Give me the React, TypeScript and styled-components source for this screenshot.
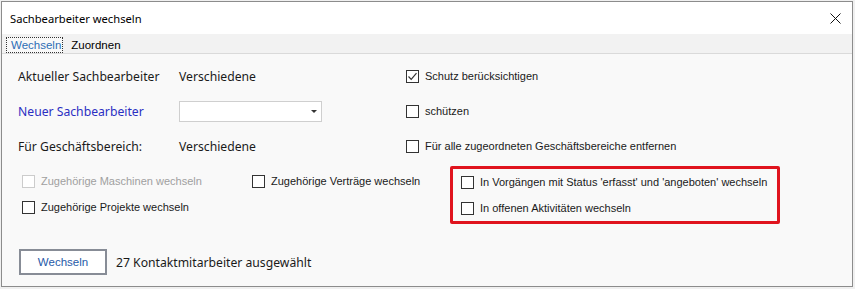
import React from 'react';
import styled, { createGlobalStyle } from 'styled-components';

const GlobalStyle = createGlobalStyle`
  html, body {
    margin: 0;
    padding: 0;
    background: #f0f0f0;
  }
  body {
    padding: 1px 0 0 1px;
  }
`;

const Dialog = styled.div`
  width: 850px;
  height: 284px;
  border: 1px solid #8c8c8c;
  background: #f9f9f9;
  display: flex;
  flex-direction: column;
  font-family: 'Liberation Sans', Arial, sans-serif;
  font-size: 11px;
  color: #1a1a1a;
`;

const TitleBar = styled.div`
  height: 32px;
  background: #fff;
  display: flex;
  align-items: center;
  justify-content: space-between;
  padding: 0 9px 0 8px;
  font-family: 'Noto Sans', 'Open Sans', sans-serif;
  font-size: 11.2px;
  color: #000;
`;

const CloseButton = styled.button`
  border: none;
  background: transparent;
  padding: 0;
  width: 16px;
  height: 16px;
  display: flex;
  align-items: center;
  justify-content: center;
  cursor: pointer;
`;

const TabStrip = styled.div`
  height: 19px;
  background: #f2f2f2;
  display: flex;
  align-items: flex-end;
  padding-left: 4px;
  border-bottom: 1px solid #dadada;
`;

const Tab = styled.div<{ $active?: boolean }>`
  height: 16px;
  line-height: 14px;
  padding: 0 1px 0 4px;
  margin-right: 3px;
  box-sizing: border-box;
  font-size: 11.5px;
  border: 1px dotted ${(p) => (p.$active ? '#333' : 'transparent')};
  background: ${(p) => (p.$active ? '#f9f9f9' : 'transparent')};
  color: ${(p) => (p.$active ? '#2d6db5' : '#000')};
`;

const Body = styled.div`
  flex: 1;
  display: flex;
  flex-direction: column;
  padding: 5px 0 0 16px;
`;

const FormGrid = styled.div`
  display: grid;
  grid-template-columns: 161px 227px 1fr;
  grid-auto-rows: 35px;
  align-items: center;
  font-family: 'Noto Sans', 'Open Sans', sans-serif;
  font-size: 12.2px;
`;

const Label = styled.div<{ $link?: boolean }>`
  color: ${(p) => (p.$link ? '#2b2fc2' : '#1a1a1a')};
`;

const Select = styled.div`
  width: 143px;
  height: 21px;
  box-sizing: border-box;
  border: 1px solid #cfcfcf;
  background: #fff;
  display: flex;
  align-items: center;
  justify-content: flex-end;
  padding-right: 4px;
`;

const Arrow = styled.span`
  width: 0;
  height: 0;
  border-left: 3px solid transparent;
  border-right: 3px solid transparent;
  border-top: 3px solid #333;
`;

const CheckRow = styled.label<{ $disabled?: boolean }>`
  display: flex;
  align-items: center;
  gap: 6px;
  font-family: 'Liberation Sans', Arial, sans-serif;
  font-size: 11px;
  line-height: 13px;
  color: ${(p) => (p.$disabled ? '#a0a0a0' : '#1a1a1a')};
  white-space: nowrap;
`;

const Box = styled.span<{ $disabled?: boolean }>`
  width: 13px;
  height: 13px;
  box-sizing: border-box;
  border: 1px solid ${(p) => (p.$disabled ? '#cccccc' : '#333')};
  background: #fff;
  display: flex;
  align-items: center;
  justify-content: center;
  flex-shrink: 0;
`;

const Options = styled.div`
  display: grid;
  grid-template-columns: 230px 198px 330px;
  margin-top: 2px;
  padding-left: 4px;
`;

const Column = styled.div`
  display: flex;
  flex-direction: column;
  padding-top: 9px;
  gap: 13px;
`;

const Highlight = styled.div`
  box-sizing: border-box;
  height: 58px;
  border: 3px solid #e0141e;
  border-radius: 2px;
  display: flex;
  flex-direction: column;
  justify-content: center;
  gap: 13px;
  padding-left: 8px;
  padding-top: 1px;
`;

const Footer = styled.div`
  display: flex;
  align-items: center;
  gap: 9px;
  margin-top: 25px;
  padding-left: 1px;
`;

const Button = styled.button`
  width: 88px;
  height: 26px;
  box-sizing: border-box;
  border: 2px solid #878c96;
  background: #fff;
  color: #1f5aa8;
  font-family: 'Liberation Sans', Arial, sans-serif;
  font-size: 11.5px;
  padding: 0;
`;

const Status = styled.span`
  font-family: 'Noto Sans', 'Open Sans', sans-serif;
  font-size: 12.2px;
  color: #1a1a1a;
`;

const Check = ({
  label,
  checked,
  disabled,
}: {
  label: string;
  checked?: boolean;
  disabled?: boolean;
}) => (
  <CheckRow $disabled={disabled}>
    <Box $disabled={disabled}>
      {checked && (
        <svg width='11' height='11' viewBox='0 0 11 11'>
          <path d='M1.5 5.5 L4.2 8.3 L9.5 2.2' fill='none' stroke='#333' strokeWidth='1.2' />
        </svg>
      )}
    </Box>
    {label}
  </CheckRow>
);

const App: React.FC = () => {
  return (
    <>
      <GlobalStyle />
      <Dialog>
        <TitleBar>
          <span>Sachbearbeiter wechseln</span>
          <CloseButton aria-label='Schließen'>
            <svg width='11' height='11' viewBox='0 0 11 11'>
              <path d='M0.5 0.5 L10.5 10.5 M10.5 0.5 L0.5 10.5' stroke='#111' strokeWidth='1' />
            </svg>
          </CloseButton>
        </TitleBar>
        <TabStrip>
          <Tab $active>Wechseln</Tab>
          <Tab>Zuordnen</Tab>
        </TabStrip>
        <Body>
          <FormGrid>
            <Label>Aktueller Sachbearbeiter</Label>
            <Label>Verschiedene</Label>
            <Check label='Schutz berücksichtigen' checked />
            <Label $link>Neuer Sachbearbeiter</Label>
            <div>
              <Select>
                <Arrow />
              </Select>
            </div>
            <Check label='schützen' />
            <Label>Für Geschäftsbereich:</Label>
            <Label>Verschiedene</Label>
            <Check label='Für alle zugeordneten Geschäftsbereiche entfernen' />
          </FormGrid>
          <Options>
            <Column>
              <Check label='Zugehörige Maschinen wechseln' disabled />
              <Check label='Zugehörige Projekte wechseln' />
            </Column>
            <Column>
              <Check label='Zugehörige Verträge wechseln' />
            </Column>
            <Highlight>
              <Check label="In Vorgängen mit Status 'erfasst' und 'angeboten' wechseln" />
              <Check label='In offenen Aktivitäten wechseln' />
            </Highlight>
          </Options>
          <Footer>
            <Button>Wechseln</Button>
            <Status>27 Kontaktmitarbeiter ausgewählt</Status>
          </Footer>
        </Body>
      </Dialog>
    </>
  );
};

export default App;
